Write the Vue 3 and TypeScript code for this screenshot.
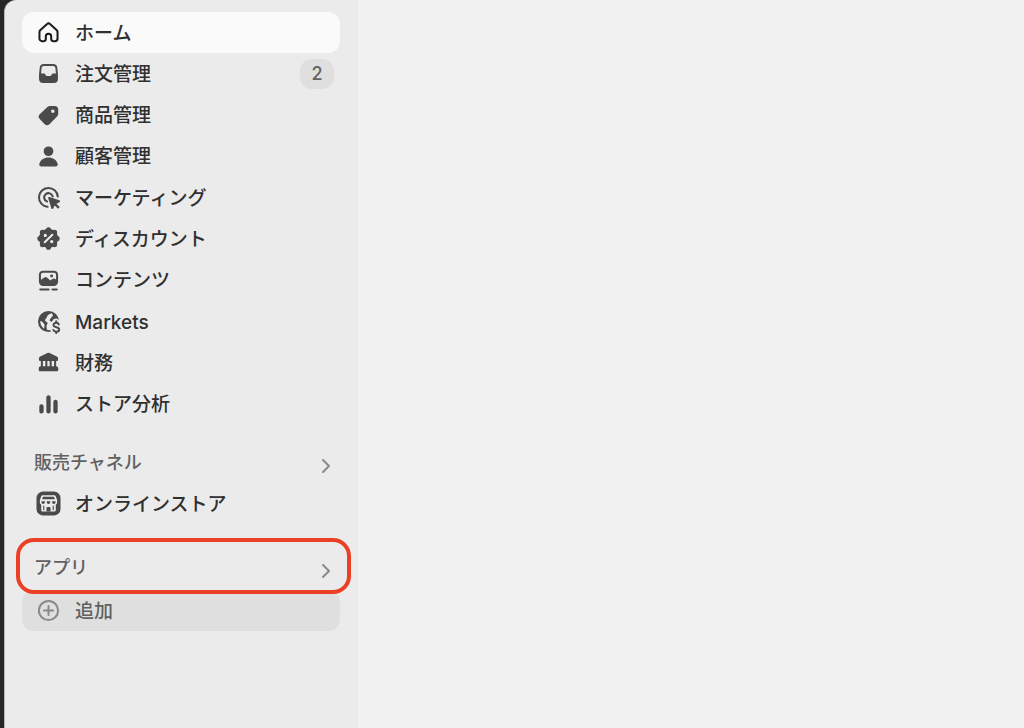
<script setup lang="ts">
type ShapeKind = 'fill' | 'line' | 'thin' | 'cut' | 'cutline' | 'halo'

interface Shape {
  kind: ShapeKind
  d: string
}

interface NavItem {
  label: string
  icon: Shape[]
  active?: boolean
  badge?: number
}

const dot = (x: number, y: number, r: number): string =>
  `M${x - r} ${y}a${r} ${r} 0 1 0 ${2 * r} 0a${r} ${r} 0 1 0 ${-2 * r} 0Z`

const scallops: string = Array.from({ length: 8 }, (_, i) => {
  const angle = (i * Math.PI) / 4
  return dot(10 + 6.4 * Math.cos(angle), 10 + 6.4 * Math.sin(angle), 1.9)
}).join('')

const dollar =
  'M17.6 12.2c-.3-.8-1-1.200-1.900-1.200-1.200 0-2 .6-2 1.600 0 2.200 4.200 1 4.200 3.300 0 1-.9 1.700-2.100 1.700-1 0-1.900-.5-2.200-1.300M15.700 9.900V11M15.700 17.600v1'

const navItems: NavItem[] = [
  {
    label: 'ホーム',
    active: true,
    icon: [
      {
        kind: 'line',
        d: 'M8 14.9V13a2 2 0 0 1 4 0v1.9c0 .9.6 1.500 1.500 1.500h1.200a2 2 0 0 0 2-2V9.700c0-.6-.3-1.200-.7-1.600l-4.700-4.300a1.800 1.800 0 0 0-2.500 0L4 8.100c-.4.4-.7 1-.7 1.600v4.700a2 2 0 0 0 2 2h1.200c.9 0 1.500-.6 1.500-1.500Z',
      },
    ],
  },
  {
    label: '注文管理',
    badge: 2,
    icon: [
      {
        kind: 'fill',
        d: 'M6.500 3h7a3 3 0 0 1 3 2.700l.5 4.800v3.500a3 3 0 0 1-3 3H6a3 3 0 0 1-3-3v-3.500l.5-4.800a3 3 0 0 1 3-2.700Z',
      },
      {
        kind: 'cut',
        d: 'M6.500 4.400h7c.8 0 1.500.6 1.600 1.400l.4 4.200h-2c-.6 0-1 .3-1.200.8l-.2.500c-.2.4-.5.6-.9.600H8.800c-.4 0-.7-.2-.9-.6l-.2-.5c-.2-.5-.6-.8-1.200-.8h-2l.4-4.200c.1-.8.8-1.400 1.600-1.400Z',
      },
    ],
  },
  {
    label: '商品管理',
    icon: [
      {
        kind: 'fill',
        d: 'M11.300 2.900h3.100A2.800 2.800 0 0 1 17.200 5.700v2.800c0 .9-.3 1.600-.9 2.200l-5.600 5.700a2.500 2.500 0 0 1-3.500 0l-3.700-3.800a2.500 2.500 0 0 1 0-3.500l5.500-5.300c.6-.6 1.400-.9 2.300-.9Z',
      },
      { kind: 'cut', d: dot(13.2, 6.9, 1.3) },
    ],
  },
  {
    label: '顧客管理',
    icon: [
      {
        kind: 'fill',
        d: dot(10, 6.1, 3.6) + 'M3.200 15.500c.8-3 3.500-4.700 6.800-4.700s6 1.700 6.800 4.700c.3 1-.5 1.900-1.500 1.900H4.700c-1 0-1.800-.9-1.500-1.900Z',
      },
    ],
  },
  {
    label: 'マーケティング',
    icon: [
      { kind: 'line', d: 'M16.900 9.300A7 7 0 1 0 9.300 16.900' },
      { kind: 'line', d: 'M13.100 9.300A3.200 3.200 0 1 0 8.900 13' },
      {
        kind: 'fill',
        d: 'M9.800 10.600c-.2-.6.300-1.100.9-.9l7.300 2.400c.8.300.8 1.200.1 1.500l-2.200 1.100 2.400 2.300-1.200 1.300-2.500-2.400-1.100 2.200c-.3.6-1.200.6-1.400-.1Z',
      },
    ],
  },
  {
    label: 'ディスカウント',
    icon: [
      { kind: 'fill', d: dot(10, 10, 7.2) },
      { kind: 'fill', d: scallops },
      { kind: 'cutline', d: 'm12.800 7.200-5.600 5.600' },
      { kind: 'cut', d: dot(7.6, 7.7, 1.2) + dot(12.4, 12.3, 1.2) },
    ],
  },
  {
    label: 'コンテンツ',
    icon: [
      {
        kind: 'fill',
        d: 'M6 2.700h8A3.100 3.100 0 0 1 17.100 5.800v5.100A3.100 3.100 0 0 1 14 14H6a3.100 3.100 0 0 1-3.100-3.100V5.800A3.100 3.100 0 0 1 6 2.700Z',
      },
      {
        kind: 'cut',
        d: 'M6 4.200h8c.9 0 1.600.7 1.600 1.600v3.500l-1.100-.6c-.6-.3-1.200-.2-1.700.2l-1.400 1.100-2.600-2.200c-.6-.5-1.300-.5-1.900 0L4.400 9.400V5.800c0-.9.7-1.600 1.600-1.600Z',
      },
      { kind: 'fill', d: dot(12.3, 6.6, 1.1) },
      { kind: 'line', d: 'M3.900 16.700h6.200M12.900 16.700h3.200' },
    ],
  },
  {
    label: 'Markets',
    icon: [
      { kind: 'fill', d: dot(10, 10, 7.8) },
      {
        kind: 'cut',
        d: 'M12.400 3.900c-1.500.3-3.300 1.400-3.700 2.900-.3 1.100-1.300 1.300-1.200 2.400.1.900 1.300.8 1.700 1.600.4.900-.5 1.500-.6 2.400-.1 1-.2 1.900.5 3.100l2.600.2 2.500-5.900 2.500-1.700-.5-1.200-2.300.5-1.500 2.200-1.600-1.100c.3-1.500 1.700-2.200 2.300-3.300.4-.8-.1-1.500-.7-2.100Z',
      },
      {
        kind: 'cut',
        d: 'M3.800 9.700c1.200.1 1.800 1 2.700 1.700.7.600.7 1.400.5 2.200l-.3 1.700c-1.700-1.100-2.900-3.200-2.900-5.600Z',
      },
      { kind: 'halo', d: dollar },
      { kind: 'line', d: dollar },
    ],
  },
  {
    label: '財務',
    icon: [
      {
        kind: 'fill',
        d: 'M9.200 3a1.800 1.800 0 0 1 1.600 0l5.400 2.600c.6.300.9.800.9 1.400v.7c0 .7-.5 1.200-1.200 1.200H4.100c-.7 0-1.200-.5-1.200-1.200V7c0-.6.3-1.100.9-1.400ZM4.400 12.700h11.200c.9 0 1.600.7 1.600 1.600v1.200c0 .6-.4 1-1 1H3.800c-.6 0-1-.4-1-1v-1.200c0-.9.7-1.600 1.600-1.600Z',
      },
      { kind: 'line', d: 'M5.100 8.500V13M8.400 8.500V13M11.600 8.500V13M14.900 8.500V13' },
    ],
  },
  {
    label: 'ストア分析',
    icon: [
      {
        kind: 'fill',
        d: 'M3.200 11.500a1.600 1.600 0 0 1 3.200 0v3.600a1.600 1.600 0 0 1-3.200 0ZM8.400 4.800a1.600 1.600 0 0 1 3.200 0v10.300a1.600 1.600 0 0 1-3.200 0ZM13.600 8a1.600 1.600 0 0 1 3.200 0v7.100a1.600 1.600 0 0 1-3.200 0Z',
      },
    ],
  },
]

const storeIcon: Shape[] = [
  {
    kind: 'fill',
    d: 'M6 1.100h8A4.900 4.900 0 0 1 18.900 6v8a4.900 4.900 0 0 1-4.900 4.900H6A4.900 4.900 0 0 1 1.100 14V6A4.900 4.900 0 0 1 6 1.100Z',
  },
  {
    kind: 'cut',
    d: 'M6 3.800h8c.7 0 1.200.3 1.400.9l1 2.900v1.500c0 .8-.4 1.400-1 1.800v4c0 .7-.4 1.100-1.100 1.100H5.700c-.7 0-1.100-.4-1.100-1.100v-4c-.6-.4-1-1-1-1.800V7.600l1-2.900c.2-.6.7-.9 1.400-.9Z',
  },
  {
    kind: 'fill',
    d: 'M5.900 5h8.200l.6 1.900H5.300ZM4.800 8.300h2.500v.8a1.250 1.250 0 0 1-2.500 0ZM8.700 8.300h2.600v.8a1.300 1.300 0 0 1-2.600 0ZM12.700 8.300h2.500v.8a1.250 1.250 0 0 1-2.500 0ZM8.500 16v-2.600c0-.5.4-.9.900-.9h1.200c.5 0 .9.400.9.900V16Z',
  },
  { kind: 'thin', d: 'M6.500 11.900v2.700M13.500 11.900v2.700' },
]

const plusIcon: Shape[] = [
  { kind: 'line', d: dot(10, 10, 7.1) },
  { kind: 'line', d: 'M10 6.600v6.800M6.600 10h6.800' },
]
</script>

<template>
  <div class="shell">
    <aside class="sidebar">
      <nav aria-label="メインメニュー">
        <ul class="nav-list">
          <li v-for="item in navItems" :key="item.label">
            <a href="#" class="row" :class="{ active: item.active }">
              <svg class="icon" viewBox="0 0 20 20" aria-hidden="true">
                <path v-for="(shape, i) in item.icon" :key="i" :class="shape.kind" :d="shape.d" />
              </svg>
              <span class="label">{{ item.label }}</span>
              <span v-if="item.badge" class="badge">{{ item.badge }}</span>
            </a>
          </li>
        </ul>
      </nav>

      <section class="channels">
        <button type="button" class="heading">
          <span>販売チャネル</span>
          <svg class="chevron" viewBox="0 0 12 16" aria-hidden="true"><path d="m3 2 6 6-6 6" /></svg>
        </button>
        <a href="#" class="row">
          <svg class="icon" viewBox="0 0 20 20" aria-hidden="true">
            <path v-for="(shape, i) in storeIcon" :key="i" :class="shape.kind" :d="shape.d" />
          </svg>
          <span class="label">オンラインストア</span>
        </a>
      </section>

      <section class="apps">
        <button type="button" class="heading highlighted">
          <span>アプリ</span>
          <svg class="chevron" viewBox="0 0 12 16" aria-hidden="true"><path d="m3 2 6 6-6 6" /></svg>
        </button>
        <button type="button" class="row add">
          <svg class="icon" viewBox="0 0 20 20" aria-hidden="true">
            <path v-for="(shape, i) in plusIcon" :key="i" :class="shape.kind" :d="shape.d" />
          </svg>
          <span class="label">追加</span>
        </button>
      </section>
    </aside>
    <main class="content"></main>
  </div>
</template>

<style>
body {
  margin: 0;
  background: #282726;
}
</style>

<style scoped>
.shell {
  display: flex;
  box-sizing: border-box;
  min-height: 100vh;
  padding-left: 4px;
  background: #282726;
  font-family: Inter, "Noto Sans CJK JP", sans-serif;
  font-size: 19px;
  font-weight: 500;
  line-height: 28px;
  color: #303030;
}

.sidebar {
  box-sizing: border-box;
  width: 354px;
  flex-shrink: 0;
  padding: 12px 18px 12px 17px;
  border-left: 1px solid #b8b8b8;
  border-top-left-radius: 12px;
  background: #ebebeb;
}

.content {
  flex: 1;
  background: #f1f1f1;
}

.nav-list {
  display: grid;
  grid-auto-rows: 1fr;
  height: 413px;
  margin: 0;
  padding: 0;
  list-style: none;
}

.row {
  display: flex;
  align-items: center;
  gap: 13px;
  box-sizing: border-box;
  width: 100%;
  height: 41px;
  padding: 0 6px 0 13px;
  border: 0;
  border-radius: 12px;
  background: transparent;
  color: inherit;
  font: inherit;
  text-align: left;
  text-decoration: none;
}

.row.active {
  background: #fafafa;
}

.label {
  padding-top: 2px;
}

.icon {
  width: 27px;
  height: 27px;
  flex-shrink: 0;
  color: #4a4a4a;
}

.active .icon {
  color: #1a1a1a;
}

.fill {
  fill: currentColor;
}

.cut {
  fill: #ebebeb;
}

.line,
.thin,
.cutline,
.halo {
  fill: none;
  stroke: currentColor;
  stroke-width: 1.5;
  stroke-linecap: round;
  stroke-linejoin: round;
}

.thin {
  stroke-width: 0.8;
}

.cutline {
  stroke: #ebebeb;
}

.halo {
  stroke: #ebebeb;
  stroke-width: 4;
}

.badge {
  display: grid;
  place-items: center;
  width: 34px;
  height: 30px;
  margin-left: auto;
  border-radius: 12px;
  background: #dfdfdf;
  color: #616161;
  font-size: 18px;
}

.channels {
  padding-top: 17px;
}

.heading {
  display: flex;
  align-items: center;
  justify-content: space-between;
  box-sizing: border-box;
  width: 100%;
  height: 41px;
  padding: 0 8px 0 12px;
  border: 0;
  background: transparent;
  color: #616161;
  font: inherit;
  font-size: 18px;
}

.chevron {
  width: 12px;
  height: 16px;
  margin-top: 6px;
  fill: none;
  stroke: #8a8a8a;
  stroke-width: 2;
  stroke-linecap: round;
  stroke-linejoin: round;
}

.apps {
  padding-top: 14px;
}

.heading.highlighted {
  position: relative;
  z-index: 1;
  width: calc(100% + 17px);
  height: 56px;
  margin: 0 -11px 0 -6px;
  padding: 4px 15px 0 14px;
  border: 4px solid #ec4025;
  border-radius: 18px;
  background: #ebebeb;
}

.row.add {
  margin-top: -4px;
  background: #dfdfdf;
  color: #616161;
}

.add .icon {
  color: #8a8a8a;
}
</style>
